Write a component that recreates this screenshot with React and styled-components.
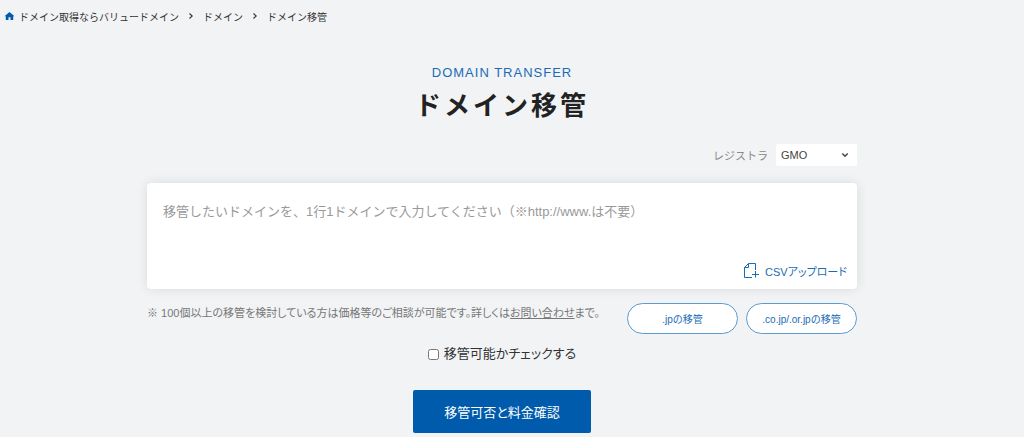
import React from "react";
import styled, { createGlobalStyle } from "styled-components";

const GlobalStyle = createGlobalStyle`
  * {
    box-sizing: border-box;
  }
  body {
    margin: 0;
    background: #f2f3f5;
    color: #333;
    font-family: "Liberation Sans", "Noto Sans CJK JP", sans-serif;
    font-size: 10px;
  }
  button, select, textarea {
    font-family: inherit;
  }
`;

const Page = styled.div`
  padding: 7px 0 4px;
`;

const Breadcrumb = styled.nav`
  display: flex;
  align-items: center;
  gap: 9px;
  height: 18px;
  padding-left: 4px;
`;

const Crumb = styled.a`
  display: flex;
  align-items: center;
  gap: 4px;
  color: inherit;
  text-decoration: none;
`;

const Content = styled.main`
  padding-right: 20px;
`;

const Inner = styled.div`
  max-width: 710px;
  margin: 0 auto;
`;

const Heading = styled.header`
  padding-top: 39px;
  text-align: center;
`;

const SubTitle = styled.p`
  margin: 0;
  color: #1a6bb5;
  font-size: 13px;
  line-height: 18px;
  letter-spacing: 1px;
`;

const Title = styled.h1`
  margin: 4px 0 0;
  color: #222;
  font-size: 26px;
  line-height: 40px;
  letter-spacing: 3px;
`;

const Registrar = styled.div`
  display: flex;
  justify-content: flex-end;
  align-items: center;
  gap: 8px;
  margin-top: 18px;
  color: #888;
  font-size: 11px;
`;

const SelectBox = styled.div`
  display: flex;
  align-items: center;
  position: relative;
  svg {
    position: absolute;
    right: 8px;
    pointer-events: none;
  }
`;

const Select = styled.select`
  appearance: none;
  width: 81px;
  height: 22px;
  padding: 0 5px;
  border: 0;
  border-radius: 2px;
  background: #fff;
  color: #444;
  font-size: 11px;
`;

const Panel = styled.div`
  display: flex;
  flex-direction: column;
  align-items: flex-end;
  margin-top: 17px;
  padding: 16px 10px 10px 16px;
  border-radius: 4px;
  background: #fff;
  box-shadow: 0 0 12px rgba(0, 0, 0, 0.1);
`;

const DomainInput = styled.textarea`
  width: 100%;
  height: 63px;
  padding: 0;
  border: 0;
  outline: 0;
  resize: none;
  background: transparent;
  font-size: 13px;
  line-height: 26px;
  &::placeholder {
    color: #999;
  }
`;

const UploadButton = styled.button`
  display: flex;
  align-items: center;
  gap: 6px;
  height: 17px;
  padding: 0;
  border: 0;
  background: none;
  color: #1a6bb5;
  font-size: 11px;
  font-feature-settings: "palt";
`;

const SubRow = styled.div`
  display: flex;
  justify-content: space-between;
  align-items: flex-start;
  margin-top: 14px;
`;

const Note = styled.p`
  margin: 0;
  color: #777;
  font-size: 11px;
  font-feature-settings: "palt";
  line-height: 20px;
  a {
    color: inherit;
  }
`;

const Links = styled.div`
  display: flex;
  gap: 8px;
`;

const PillLink = styled.a`
  display: flex;
  align-items: center;
  justify-content: center;
  width: 111px;
  height: 31px;
  border: 1px solid #5b9bd0;
  border-radius: 16px;
  background: #fff;
  color: #1a6bb5;
  text-decoration: none;
`;

const CheckLabel = styled.label`
  display: flex;
  justify-content: center;
  align-items: center;
  gap: 5px;
  margin-top: 10px;
  font-size: 13px;
  font-feature-settings: "palt";
  line-height: 20px;
  input {
    width: 11px;
    height: 11px;
    margin: 0;
  }
`;

const SubmitButton = styled.button`
  display: block;
  width: 178px;
  height: 43px;
  margin: 26px auto 0;
  border: 0;
  border-radius: 2px;
  background: #005bac;
  color: #fff;
  font-size: 13px;
  font-feature-settings: "palt";
`;

const HomeIcon = () => (
  <svg width="11" height="10" viewBox="0 0 11 10" fill="#005bac">
    <path d="M5.5 1 10.5 5.2H9.2V9H6.5V6.3h-2V9H1.8V5.2H.5Z" />
  </svg>
);

const ArrowIcon = () => (
  <svg width="6" height="8" viewBox="0 0 6 8" fill="none" stroke="#333" strokeWidth="1.1">
    <path d="m1.5 1.5 2.7 2.5-2.7 2.5" />
  </svg>
);

const ChevronIcon = () => (
  <svg width="8" height="6" viewBox="0 0 8 6" fill="none" stroke="#444" strokeWidth="1.5">
    <path d="m1.3 1.5 2.7 2.7 2.7-2.7" />
  </svg>
);

const UploadIcon = () => (
  <svg width="15" height="15" viewBox="0 0 15 15" fill="none" stroke="#1a6bb5">
    <path d="M8 14.5H.5V4.5L4.5.5h7V7M4.5.5v4h-4M11.5 8v6.5M8 11.5h7" />
  </svg>
);

const App = () => (
  <>
    <GlobalStyle />
    <Page>
      <Breadcrumb>
        <Crumb href="#">
          <HomeIcon />
          ドメイン取得ならバリュードメイン
        </Crumb>
        <ArrowIcon />
        <Crumb href="#">ドメイン</Crumb>
        <ArrowIcon />
        <span>ドメイン移管</span>
      </Breadcrumb>
      <Content>
        <Inner>
          <Heading>
            <SubTitle>DOMAIN TRANSFER</SubTitle>
            <Title>ドメイン移管</Title>
          </Heading>
          <Registrar>
            <label htmlFor="registrar">レジストラ</label>
            <SelectBox>
              <Select id="registrar" defaultValue="GMO">
                <option>GMO</option>
              </Select>
              <ChevronIcon />
            </SelectBox>
          </Registrar>
          <Panel>
            <DomainInput
              aria-label="ドメイン"
              placeholder="移管したいドメインを、1行1ドメインで入力してください（※http://www.は不要）"
            />
            <UploadButton type="button">
              <UploadIcon />
              CSVアップロード
            </UploadButton>
          </Panel>
          <SubRow>
            <Note>
              ※ 100個以上の移管を検討している方は価格等のご相談が可能です。詳しくは
              <a href="#">お問い合わせ</a>まで。
            </Note>
            <Links>
              <PillLink href="#">.jpの移管</PillLink>
              <PillLink href="#">.co.jp/.or.jpの移管</PillLink>
            </Links>
          </SubRow>
          <CheckLabel>
            <input type="checkbox" />
            移管可能かチェックする
          </CheckLabel>
          <SubmitButton type="button">移管可否と料金確認</SubmitButton>
        </Inner>
      </Content>
    </Page>
  </>
);

export default App;
